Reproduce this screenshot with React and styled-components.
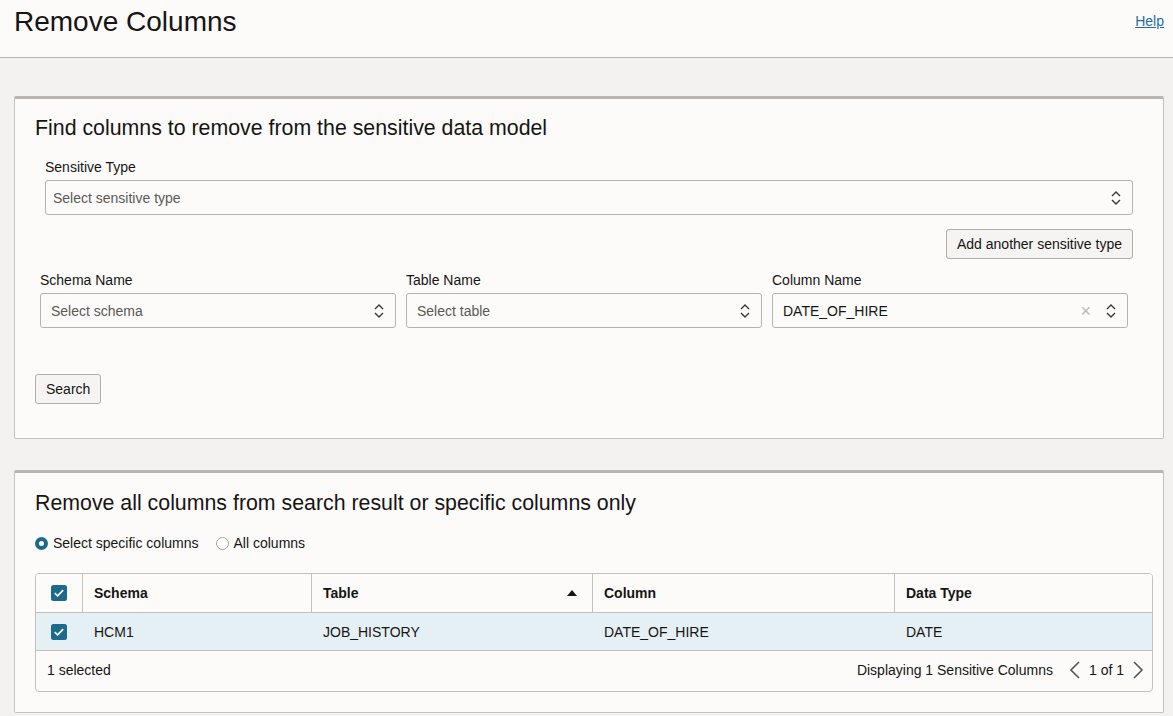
import React from "react";
import styled, { createGlobalStyle } from "styled-components";

const GlobalStyle = createGlobalStyle`
  body {
    margin: 0;
    background: #f3f2f1;
    font-family: "Liberation Sans", Arial, sans-serif;
    color: #161513;
  }
`;

const colors = {
  text: "#161513",
  muted: "#5b5855",
  border: "#c4c0bc",
  panelTop: "#bab5b0",
  panel: "#fcfbfa",
  accent: "#1c6a8c",
  link: "#1f6fa3",
  rowSelected: "#e4f0f4",
};

const Header = styled.header`
  height: 57px;
  background: ${colors.panel};
  border-bottom: 1px solid ${colors.panelTop};
  display: flex;
  justify-content: space-between;
  align-items: flex-start;
  padding: 0 9px 0 14px;
`;

const PageTitle = styled.h1`
  margin: 6px 0 0;
  font-size: 28px;
  font-weight: 400;
  line-height: 32px;
`;

const HelpLink = styled.a`
  margin-top: 13px;
  font-size: 14px;
  color: ${colors.link};
  text-decoration: underline;
`;

const Content = styled.main`
  padding: 38px 9px 4px 14px;
  display: flex;
  flex-direction: column;
  gap: 31px;
`;

const Panel = styled.section`
  background: ${colors.panel};
  border: 1px solid ${colors.border};
  border-top: 3px solid ${colors.panelTop};
  border-radius: 2px;
  padding: ${({ $pad }) => $pad};
`;

const PanelTitle = styled.h2`
  margin: 0;
  font-size: 21.33px;
  font-weight: 400;
  line-height: 24px;
`;

const Field = styled.div`
  display: flex;
  flex-direction: column;
  gap: 5px;
`;

const Label = styled.label`
  font-size: 14px;
  line-height: 16px;
`;

const SelectBox = styled.div`
  height: 35px;
  box-sizing: border-box;
  border: 1px solid #b6b2ae;
  border-radius: 3px;
  background: ${colors.panel};
  display: flex;
  align-items: center;
  padding: ${({ $pl }) => `0 10px 0 ${$pl}px`};
  font-size: 14px;
  color: ${({ $placeholder }) => ($placeholder ? colors.muted : colors.text)};
`;

const SelectText = styled.span`
  flex: 1;
`;

const ClearX = styled.span`
  color: #b9b6b3;
  font-size: 18px;
  margin-right: 14px;
  line-height: 1;
`;

const TypeBlock = styled.div`
  margin: 19px 10px 0;
  display: flex;
  flex-direction: column;
`;

const Button = styled.button`
  height: 30px;
  box-sizing: border-box;
  padding: 0 10px;
  border: 1px solid #b1ada9;
  border-radius: 3px;
  background: #f5f4f2;
  font-family: inherit;
  font-size: 14px;
  color: ${colors.text};
`;

const AddRow = styled.div`
  margin-top: 14px;
  display: flex;
  justify-content: flex-end;
`;

const FilterGrid = styled.div`
  margin: 13px 15px 0 5px;
  display: grid;
  grid-template-columns: repeat(3, 1fr);
  gap: 10px;
`;

const SearchRow = styled.div`
  margin-top: 46px;
  display: flex;
`;

const RadioGroup = styled.div`
  margin-top: 20px;
  display: flex;
  gap: 17px;
  font-size: 14px;
`;

const RadioOption = styled.label`
  display: flex;
  align-items: center;
  gap: 5px;
`;

const RadioDot = styled.span`
  width: 13px;
  height: 13px;
  box-sizing: border-box;
  border-radius: 50%;
  border: ${({ $on }) => ($on ? `4px solid ${colors.accent}` : "1px solid #a8a4a0")};
  background: #fff;
`;

const Table = styled.div`
  margin-top: 22px;
  border: 1px solid ${colors.border};
  border-radius: 4px;
  background: ${colors.panel};
  overflow: hidden;
`;

const Row = styled.div`
  display: grid;
  grid-template-columns: 46px 229px 281px 302px 1fr;
  height: ${({ $h }) => $h}px;
  background: ${({ $selected }) => ($selected ? colors.rowSelected : colors.panel)};
  border-bottom: 1px solid ${colors.border};
  font-size: 14px;
`;

const HeadCell = styled.div`
  display: flex;
  align-items: center;
  justify-content: ${({ $center }) => ($center ? "center" : "space-between")};
  padding: ${({ $center }) => ($center ? "0" : "0 15px 0 11px")};
  font-weight: 700;
  border-left: ${({ $first }) => ($first ? "none" : `1px solid ${colors.border}`)};
`;

const Cell = styled.div`
  display: flex;
  align-items: center;
  justify-content: ${({ $center }) => ($center ? "center" : "flex-start")};
  padding: ${({ $center }) => ($center ? "0" : "0 11px")};
  border-left: ${({ $first }) => ($first ? "none" : "1px solid transparent")};
`;

const Footer = styled.div`
  height: 40px;
  display: flex;
  align-items: center;
  justify-content: space-between;
  padding: 0 8px 3px 11px;
  box-sizing: border-box;
  font-size: 14px;
`;

const Pager = styled.div`
  display: flex;
  align-items: center;
  gap: 8px;
`;

const PagerText = styled.span`
  margin-right: 8px;
`;

const Check = () => (
  <svg width="16" height="16" viewBox="0 0 16 16">
    <rect width="16" height="16" rx="2.5" fill={colors.accent} />
    <path d="M3.8 8.2l2.8 2.7 5.6-5.8" fill="none" stroke="#fff" strokeWidth="1.6" />
  </svg>
);

const UpDown = () => (
  <svg width="12" height="16" viewBox="0 0 12 16">
    <path d="M2 6l4-4 4 4M2 10l4 4 4-4" fill="none" stroke="#3a3835" strokeWidth="1.4" />
  </svg>
);

const SortUp = () => (
  <svg width="10" height="6" viewBox="0 0 10 6">
    <path d="M0 6L5 0l5 6z" fill="#161513" />
  </svg>
);

const Chevron = ({ dir }) => (
  <svg width="12" height="18" viewBox="0 0 12 18">
    <path
      d={dir === "left" ? "M10 1L2 9l8 8" : "M2 1l8 8-8 8"}
      fill="none"
      stroke="#55524f"
      strokeWidth="1.6"
    />
  </svg>
);

const Select = ({ value, placeholder, clearable, pl = 10 }) => (
  <SelectBox $placeholder={!value} $pl={pl}>
    <SelectText>{value || placeholder}</SelectText>
    {clearable && <ClearX>×</ClearX>}
    <UpDown />
  </SelectBox>
);

const filters = [
  { label: "Schema Name", placeholder: "Select schema" },
  { label: "Table Name", placeholder: "Select table" },
  { label: "Column Name", value: "DATE_OF_HIRE", clearable: true },
];

const headers = ["Schema", "Table", "Column", "Data Type"];
const rows = [["HCM1", "JOB_HISTORY", "DATE_OF_HIRE", "DATE"]];

export default function App() {
  return (
    <>
      <GlobalStyle />
      <Header>
        <PageTitle>Remove Columns</PageTitle>
        <HelpLink href="#">Help</HelpLink>
      </Header>
      <Content>
        <Panel $pad="17px 20px 34px">
          <PanelTitle>Find columns to remove from the sensitive data model</PanelTitle>
          <TypeBlock>
            <Field>
              <Label>Sensitive Type</Label>
              <Select placeholder="Select sensitive type" pl={7} />
            </Field>
            <AddRow>
              <Button>Add another sensitive type</Button>
            </AddRow>
          </TypeBlock>
          <FilterGrid>
            {filters.map((f) => (
              <Field key={f.label}>
                <Label>{f.label}</Label>
                <Select {...f} />
              </Field>
            ))}
          </FilterGrid>
          <SearchRow>
            <Button>Search</Button>
          </SearchRow>
        </Panel>

        <Panel $pad="18px 10px 20px 20px">
          <PanelTitle>Remove all columns from search result or specific columns only</PanelTitle>
          <RadioGroup>
            <RadioOption>
              <RadioDot $on />
              Select specific columns
            </RadioOption>
            <RadioOption>
              <RadioDot />
              All columns
            </RadioOption>
          </RadioGroup>
          <Table>
            <Row $h={38}>
              <HeadCell $center $first>
                <Check />
              </HeadCell>
              {headers.map((h) => (
                <HeadCell key={h}>
                  {h}
                  {h === "Table" && <SortUp />}
                </HeadCell>
              ))}
            </Row>
            {rows.map((r) => (
              <Row $h={37} $selected key={r.join()}>
                <Cell $center $first>
                  <Check />
                </Cell>
                {r.map((v, i) => (
                  <Cell key={i}>{v}</Cell>
                ))}
              </Row>
            ))}
            <Footer>
              <span>1 selected</span>
              <Pager>
                <PagerText>Displaying 1 Sensitive Columns</PagerText>
                <Chevron dir="left" />
                <span>1 of 1</span>
                <Chevron dir="right" />
              </Pager>
            </Footer>
          </Table>
        </Panel>
      </Content>
    </>
  );
}
